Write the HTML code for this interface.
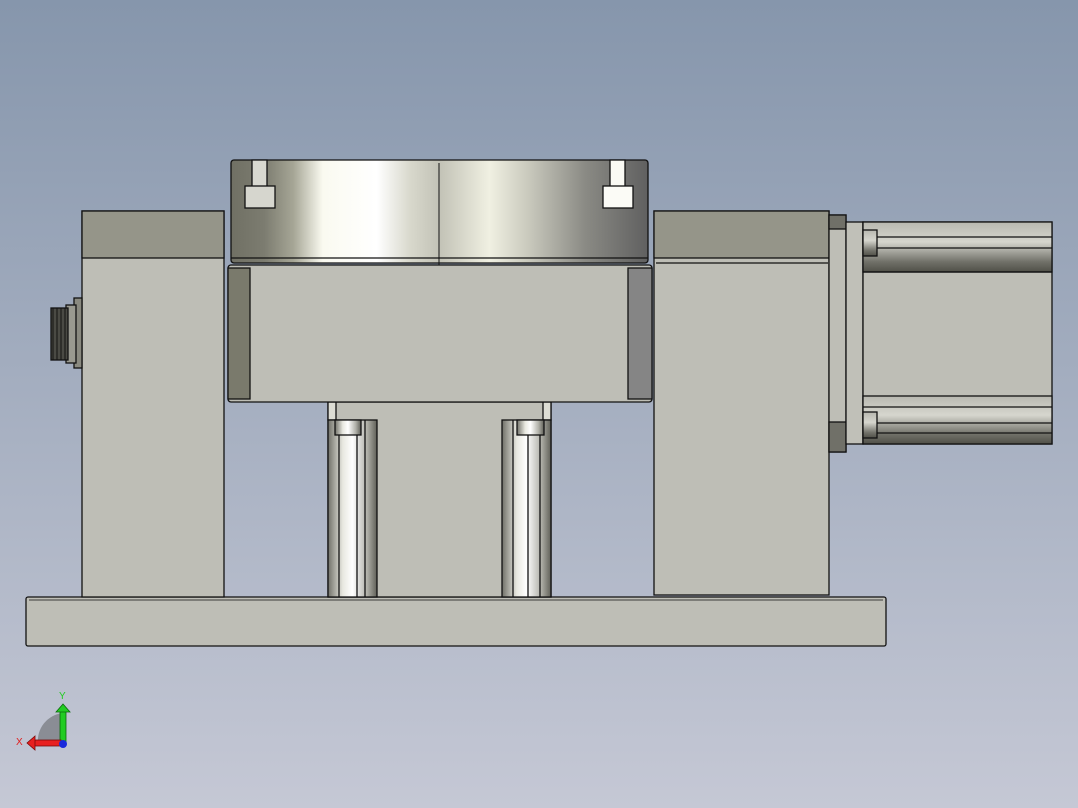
<!DOCTYPE html>
<html><head><meta charset="utf-8"><style>html,body{margin:0;padding:0;width:1078px;height:808px;overflow:hidden}</style></head>
<body>
<svg width="1078" height="808" viewBox="0 0 1078 808" xmlns="http://www.w3.org/2000/svg" stroke="#111" stroke-width="1.3">
<defs>
<linearGradient id="bg" x1="0" y1="0" x2="0" y2="1"><stop offset="0" stop-color="#8696ac"/><stop offset="1" stop-color="#c5c8d5"/></linearGradient>
<linearGradient id="ring" x1="0" x2="1" y1="0" y2="0">
<stop offset="0" stop-color="#707064"/><stop offset="0.08" stop-color="#7c7c70"/><stop offset="0.15" stop-color="#a6a696"/><stop offset="0.22" stop-color="#fafaf0"/><stop offset="0.35" stop-color="#ffffff"/><stop offset="0.43" stop-color="#d8d8cc"/><stop offset="0.5" stop-color="#c2c2b6"/><stop offset="0.62" stop-color="#f0f0e2"/><stop offset="0.72" stop-color="#c6c6ba"/><stop offset="0.85" stop-color="#8a8a84"/><stop offset="1" stop-color="#606060"/></linearGradient>
<linearGradient id="rod" x1="0" x2="1"><stop offset="0" stop-color="#707068"/><stop offset="0.3" stop-color="#e8e8e0"/><stop offset="0.5" stop-color="#ffffff"/><stop offset="0.8" stop-color="#b0b0a8"/><stop offset="1" stop-color="#606058"/></linearGradient>
<linearGradient id="cyl" x1="0" y1="0" x2="0" y2="1"><stop offset="0" stop-color="#b8b8b0"/><stop offset="0.4" stop-color="#d6d6ce"/><stop offset="0.8" stop-color="#707068"/><stop offset="1" stop-color="#505048"/></linearGradient>
</defs>
<rect width="1078" height="808" fill="url(#bg)" stroke="none"/>
<!-- base -->
<rect x="26" y="597" width="860" height="49" rx="2" fill="#bebeb6"/>
<line x1="29" y1="600" x2="883" y2="600" stroke-width="0.8"/>
<!-- left block -->
<rect x="82" y="211" width="142" height="386" fill="#bebeb6"/>
<rect x="82" y="211" width="142" height="47" fill="#959589"/>
<!-- connector -->
<rect x="74" y="298" width="8" height="70" fill="#8a8a80"/>
<rect x="66" y="305" width="10" height="58" fill="#9a9a90"/>
<rect x="51" y="308" width="17" height="52" fill="#4a4a44"/>
<g stroke-width="1"><line x1="53" y1="308" x2="53" y2="360"/><line x1="57" y1="308" x2="57" y2="360"/><line x1="61" y1="308" x2="61" y2="360"/><line x1="65" y1="308" x2="65" y2="360"/></g>
<!-- right block -->
<rect x="654" y="211" width="175" height="384" fill="#bebeb6"/>
<rect x="654" y="211" width="175" height="47" fill="#959589"/>
<line x1="656" y1="263" x2="828" y2="263"/>
<!-- motor flange -->
<rect x="829" y="215" width="17" height="237" fill="#bebeb6"/>
<rect x="829" y="215" width="17" height="14" fill="#707068"/>
<rect x="829" y="422" width="17" height="30" fill="#707068"/>
<rect x="846" y="222" width="17" height="222" fill="#c0c0b8"/>
<!-- motor body -->
<rect x="863" y="222" width="189" height="222" fill="#bebeb6"/>
<rect x="863" y="222" width="189" height="50" fill="url(#cyl)"/>
<line x1="863" y1="237" x2="1052" y2="237"/><line x1="863" y1="248" x2="1052" y2="248"/><line x1="863" y1="272" x2="1052" y2="272"/>
<rect x="863" y="396" width="189" height="48" fill="url(#cyl)"/>
<line x1="863" y1="407" x2="1052" y2="407"/><line x1="863" y1="423" x2="1052" y2="423"/><line x1="863" y1="433" x2="1052" y2="433"/>
<rect x="863" y="230" width="14" height="26" fill="url(#cyl)"/>
<rect x="863" y="412" width="14" height="26" fill="url(#cyl)"/>
<!-- lower part -->
<rect x="328" y="402" width="223" height="195" fill="#bebeb6"/>
<rect x="328" y="402" width="8" height="18" fill="#ddddd4"/>
<rect x="543" y="402" width="8" height="18" fill="#ddddd4"/>
<rect x="328" y="420" width="49" height="177" fill="url(#rod)"/>
<line x1="339" y1="420" x2="339" y2="597"/><line x1="357" y1="420" x2="357" y2="597"/><line x1="365" y1="420" x2="365" y2="597"/>
<rect x="335" y="420" width="26" height="15" fill="url(#rod)"/>
<rect x="502" y="420" width="49" height="177" fill="url(#rod)"/>
<line x1="513" y1="420" x2="513" y2="597"/><line x1="528" y1="420" x2="528" y2="597"/><line x1="540" y1="420" x2="540" y2="597"/>
<rect x="517" y="420" width="27" height="15" fill="url(#rod)"/>
<!-- middle box -->
<rect x="228" y="265" width="424" height="137" rx="3" fill="#bebeb6"/>
<rect x="228" y="268" width="22" height="131" fill="#7a7a6c"/>
<rect x="628" y="268" width="24" height="131" fill="#858585"/>
<!-- ring -->
<rect x="231" y="160" width="417" height="103" rx="3" fill="url(#ring)"/>
<line x1="231" y1="258" x2="648" y2="258"/>
<line x1="439" y1="163" x2="439" y2="265" stroke-width="1"/>
<rect x="252" y="160" width="15" height="27" fill="#d8d8d0"/>
<rect x="245" y="186" width="30" height="22" fill="#d6d6ce"/>
<rect x="610" y="160" width="15" height="27" fill="#fafaf4"/>
<rect x="603" y="186" width="30" height="22" fill="#fbfbf6"/>
<!-- triad -->
<path d="M38 744 A28 28 0 0 1 63 713 L63 744 Z" fill="#8a8d95" stroke="none"/>
<rect x="60" y="710" width="6" height="32" fill="#22cc22" stroke="#0a6a0a" stroke-width="0.8"/>
<path d="M56 712 L63 704 L70 712 Z" fill="#22cc22" stroke="#0a6a0a" stroke-width="0.8"/>
<rect x="33" y="740" width="28" height="6" fill="#e82020" stroke="#7a0a0a" stroke-width="0.8"/>
<path d="M35 736 L27 743 L35 750 Z" fill="#e82020" stroke="#7a0a0a" stroke-width="0.8"/>
<circle cx="63" cy="744" r="4" fill="#1a2adb" stroke="none"/>
<text x="59" y="699" font-family="Liberation Sans, sans-serif" font-size="10" fill="#22cc22" stroke="none">Y</text>
<text x="16" y="745" font-family="Liberation Sans, sans-serif" font-size="10" fill="#e02020" stroke="none">X</text>
</svg>
</body></html>
